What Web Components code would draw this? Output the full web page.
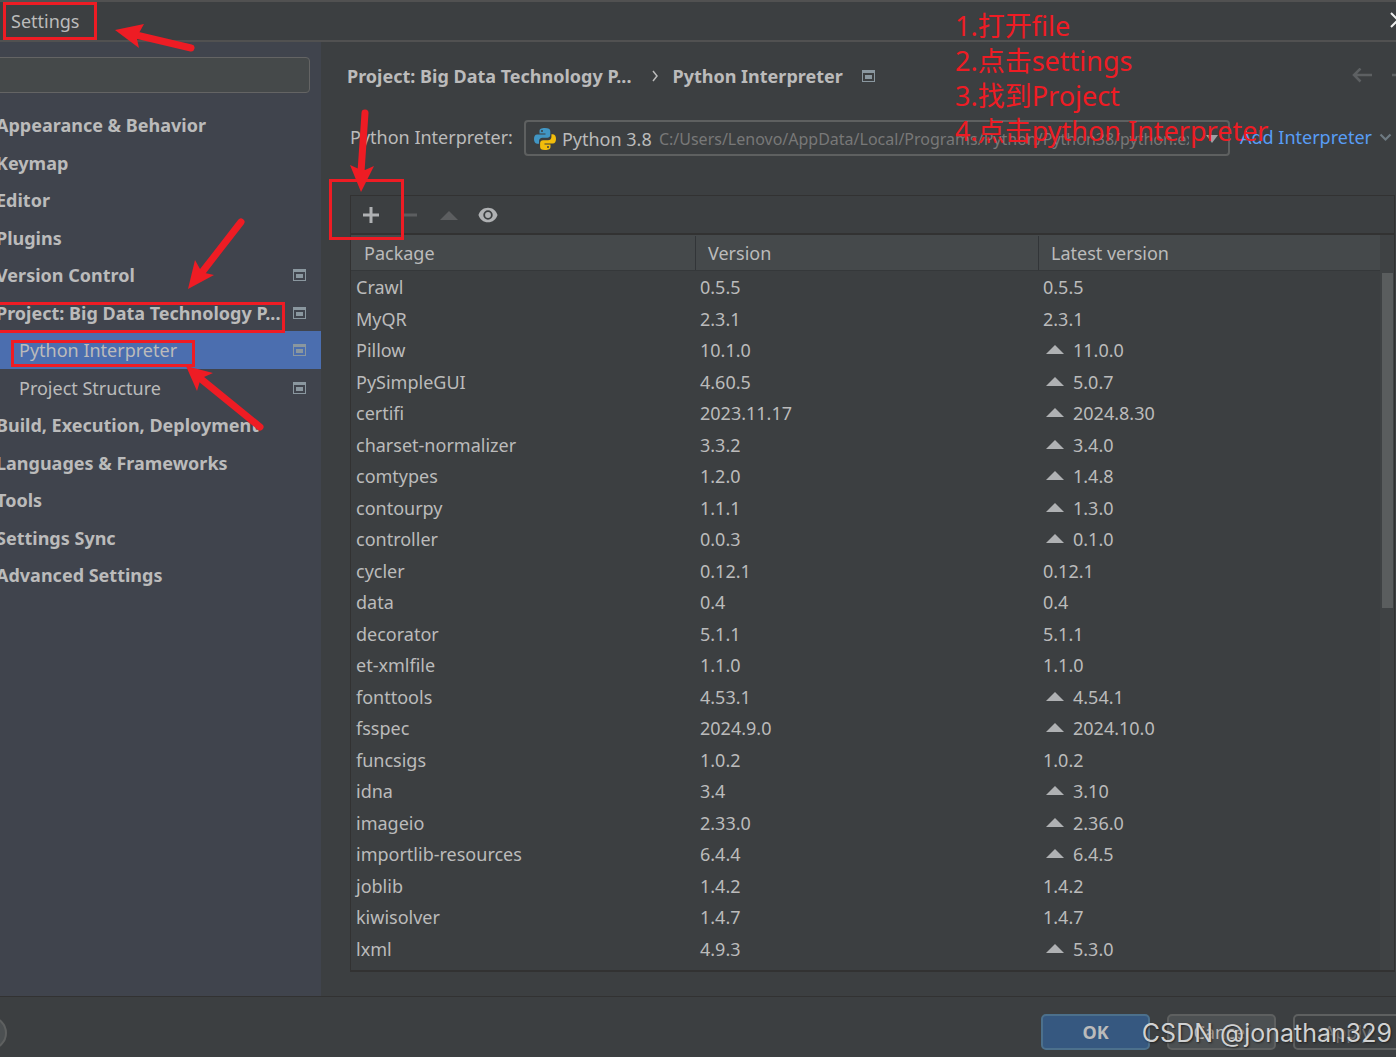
<!DOCTYPE html>
<html lang="en">
<head>
<meta charset="utf-8">
<title>Settings</title>
<style>
html, body { margin: 0; background: #3c3f41; }
body { font: 18px/26px "Noto Sans", "Noto Sans CJK SC", sans-serif; color: #bbbbbb; overflow: hidden; }
</style>
</head>
<body>
<settings-window></settings-window>
<script>
function define(name, html, setup) {
  const t = document.createElement('template');
  t.innerHTML = html;
  customElements.define(name, class extends HTMLElement {
    constructor() {
      super();
      this.attachShadow({ mode: 'open' }).appendChild(t.content.cloneNode(true));
    }
    connectedCallback() { if (setup) setup(this, this.shadowRoot); }
  });
}

define('project-icon', `
<style>:host{display:block;flex:none;width:13px;height:12px}svg{display:block}</style>
<svg width="13" height="12" aria-hidden="true"><path fill="#8a979f" fill-rule="evenodd" d="M0 0h13v12H0zM1 3v8h11V3z"/><path fill="#8a979f" d="M3 5h7v4H3z"/></svg>`);

define('title-bar', `
<style>
:host{display:flex;align-items:center;justify-content:space-between;height:38px;border:solid #515151;border-width:2px 0;padding-left:11px}
h1{font:inherit;margin:0}
button{border:0;background:none;padding:0;width:6px;height:18px;overflow:hidden}
svg{display:block}
</style>
<h1><slot></slot></h1>
<button aria-label="Close"><svg width="16" height="18"><path d="M1 1l14 14M15 1L1 15" stroke="#eee" stroke-width="2"/></svg></button>`);

define('nav-item', `
<style>
:host{display:block;height:38px}
:host(:nth-of-type(even)){height:37px}
a{display:flex;height:100%;align-items:center;color:inherit;text-decoration:none;font-weight:700;padding:0 15px 0 0;box-sizing:border-box}
span{flex:1;white-space:nowrap;margin-left:-4px}
:host([child]) a{font-weight:400}
:host([child]) span{margin-left:19px}
:host([selected]) a{background:#4b6eaf}
project-icon{display:none}
:host([project]) project-icon{display:block}
</style>
<a href="#"><span><slot></slot></span><project-icon></project-icon></a>`);

define('settings-nav', `
<style>
:host{display:block;flex:none;width:321px;background:#40444d;overflow:hidden}
input{display:block;box-sizing:border-box;width:314px;height:36px;margin:15px 0 13px -4px;border:1px solid #646464;border-radius:4px;background:#45494a;color:inherit;font:inherit}
nav{display:block}
</style>
<input type="search" aria-label="Search settings">
<nav>
<nav-item>Appearance &amp; Behavior</nav-item>
<nav-item>Keymap</nav-item>
<nav-item>Editor</nav-item>
<nav-item>Plugins</nav-item>
<nav-item project>Version Control</nav-item>
<nav-item project>Project: Big Data Technology P...</nav-item>
<nav-item child selected project>Python Interpreter</nav-item>
<nav-item child project>Project Structure</nav-item>
<nav-item>Build, Execution, Deployment</nav-item>
<nav-item>Languages &amp; Frameworks</nav-item>
<nav-item>Tools</nav-item>
<nav-item>Settings Sync</nav-item>
<nav-item>Advanced Settings</nav-item>
</nav>`);

define('page-breadcrumb', `
<style>
:host{display:flex;align-items:center;height:36px;margin-top:16px;padding-left:26px;font-weight:700;white-space:nowrap}
.sep{margin:0 14px 0 21px}
project-icon{margin-left:19px}
.nav{margin-left:auto;display:flex;gap:20px}
button{border:0;background:none;padding:0}
button:last-child{width:4px;overflow:hidden}
svg{display:block}
</style>
<span>Project: Big Data Technology P...</span>
<svg class="sep" width="6" height="12" aria-hidden="true"><path d="M1 1l4 5-4 5" fill="none" stroke="#bbb" stroke-width="1.5"/></svg>
<span>Python Interpreter</span><project-icon></project-icon>
<div class="nav">
<button aria-label="Back"><svg width="20" height="16"><path d="M20 7H2M8.500 .5L2 7l6.500 6.500" fill="none" stroke="#5d6062" stroke-width="2.500"/></svg></button>
<button aria-label="Forward"><svg width="20" height="16"><path d="M0 7h18M12 1l6 6-6 6" fill="none" stroke="#5d6062" stroke-width="2.500"/></svg></button>
</div>`);

define('interpreter-picker', `
<style>
:host{display:flex;align-items:center;margin-top:26px;height:36px;padding:0 4px 0 29px;white-space:nowrap}
.box{box-sizing:border-box;flex:1;min-width:0;height:36px;margin:0 10px 0 11px;display:flex;align-items:center;border:2px solid #5e6060;border-radius:4px;padding:2px 10px 0 8px}
svg{display:block;flex:none}
select{appearance:none;border:0;background:none;color:inherit;font:inherit;padding:0;margin:0 4px 0 6px;width:93px;flex:none}
.path{flex:1;min-width:0;overflow:hidden;color:#787878;font-size:16px;margin-right:17px}
label,a{padding-bottom:2px}
a{color:#589df6;text-decoration:none;display:flex;align-items:center;gap:7px}
</style>
<label for="py">Python Interpreter:</label>
<div class="box">
<svg width="22" height="22" viewBox="0 0 22 22" aria-hidden="true">
<path fill="#4196c4" d="M11 0c-4 0-5.500 1-5.500 3.200V5.500h6V6.500H3.200C1 6.500 0 8.500 0 11s1 4.700 3 4.700h2v-2.600c0-2 1.500-3.300 3.300-3.300h5c1.700 0 3-1.300 3-3V3.200C16.300 1 14.500 0 11 0z"/><circle cx="8" cy="3" r="1" fill="#3c3f41"/>
<path fill="#f2bd0b" d="M11 22c4 0 5.500-1 5.500-3.200v-2.300h-6v-1h8.300c2.200 0 3.200-2 3.200-4.500s-1-4.700-3-4.700h-1.600v2.600c0 2-1.500 3.300-3.300 3.300h-5c-1.700 0-3 1.300-3 3v3.600C6.100 21 7.500 22 11 22z"/><circle cx="14" cy="19" r="1" fill="#3c3f41"/></svg>
<select id="py"><option>Python 3.8</option></select>
<span class="path">C:/Users/Lenovo/AppData/Local/Programs/Python/Python38/python.exe</span>
<svg width="12" height="8" aria-hidden="true"><path d="M0 0h12L6 8z" fill="#9da0a2"/></svg>
</div>
<a href="#">Add Interpreter <svg width="13" height="9" aria-hidden="true"><path d="M1.500 1.500l5 5 5-5" fill="none" stroke="#6e7a82" stroke-width="2.200"/></svg></a>`);

define('package-toolbar', `
<style>
:host{display:flex;align-items:center;height:36px;padding-top:1px;box-sizing:content-box;border-bottom:2px solid #323232;padding-left:10px;gap:19px}
button{border:0;background:none;padding:0;width:20px;height:20px;display:grid;place-items:center}
svg{display:block}
</style>
<button aria-label="Install"><svg width="16" height="16"><path d="M8 0v16M0 8h16" stroke="#afb1b3" stroke-width="3"/></svg></button>
<button aria-label="Uninstall"><svg width="16" height="16"><path d="M1 8h14" stroke="#5c5e60" stroke-width="3"/></svg></button>
<button aria-label="Upgrade"><svg width="18" height="16"><path d="M0 13L9 4l9 9z" fill="#5c5e60"/></svg></button>
<button aria-label="Show early releases"><svg width="20" height="16" viewBox="0 0 22 16"><path fill="#afb1b3" fill-rule="evenodd" d="M11 0C6 0 2 3 .5 8 2 13 6 16 11 16s9-3 10.500-8C20 3 16 0 11 0zm0 2.800a5.200 5.200 0 1 1 0 10.400 5.200 5.200 0 0 1 0-10.400z"/><circle cx="11" cy="8" r="3.200" fill="#afb1b3"/></svg></button>`);

const packages = [
['Crawl','0.5.5','0.5.5'],['MyQR','2.3.1','2.3.1'],['Pillow','10.1.0','11.0.0'],['PySimpleGUI','4.60.5','5.0.7'],
['certifi','2023.11.17','2024.8.30'],['charset-normalizer','3.3.2','3.4.0'],['comtypes','1.2.0','1.4.8'],
['contourpy','1.1.1','1.3.0'],['controller','0.0.3','0.1.0'],['cycler','0.12.1','0.12.1'],['data','0.4','0.4'],
['decorator','5.1.1','5.1.1'],['et-xmlfile','1.1.0','1.1.0'],['fonttools','4.53.1','4.54.1'],
['fsspec','2024.9.0','2024.10.0'],['funcsigs','1.0.2','1.0.2'],['idna','3.4','3.10'],['imageio','2.33.0','2.36.0'],
['importlib-resources','6.4.4','6.4.5'],['joblib','1.4.2','1.4.2'],['kiwisolver','1.4.7','1.4.7'],['lxml','4.9.3','5.3.0']];

define('package-table', `
<style>
:host{display:flex}
table{flex:1;border-collapse:separate;border-spacing:0;table-layout:fixed;margin-bottom:6px}
.a{width:345px}.b{width:343px}
th{height:36px;box-sizing:border-box;font-weight:400;text-align:left;background:#45494b;padding:0 0 0 13px;border-bottom:1px solid #35383a}
th+th{padding-left:12px}
th:not(:last-child){background:linear-gradient(#323538,#323538) right center/1px 34px no-repeat #45494b}
td{height:31px;padding:0 0 0 5px;line-height:26px}
td:not(:first-child){padding-left:4px}
tr:nth-child(odd) td{height:32px}
svg{margin:0 9px 0 3px;vertical-align:3px}
.bar{flex:none;width:14px;background:#3f4244;padding-top:38px;box-sizing:border-box}
.bar i{display:block;width:11px;height:335px;margin-left:2px;background:#5a5d5e}
</style>
<table><colgroup><col class="a"><col class="b"><col></colgroup>
<thead><tr><th>Package</th><th>Version</th><th>Latest version</th></tr></thead><tbody></tbody></table>
<div class="bar"><i></i></div>`, (host, root) => {
  root.querySelector('tbody').innerHTML = packages.map(([n, v, l]) =>
    `<tr><td>${n}</td><td>${v}</td><td>${v === l ? '' : '<svg width="18" height="9" aria-hidden="true"><path d="M0 9L9 0l9 9z" fill="#afb1b3"/></svg>'}${l}</td></tr>`).join('');
});

define('interpreter-page', `
<style>
:host{display:block;flex:1;min-width:0}
section{margin:39px 1px 24px 29px;border:1px solid #323232;border-bottom-width:2px;}
</style>
<page-breadcrumb></page-breadcrumb>
<interpreter-picker></interpreter-picker>
<section><package-toolbar></package-toolbar><package-table></package-table></section>`);

define('dialog-button', `
<style>
:host{display:block}
button{display:block;width:109px;height:36px;box-sizing:border-box;border:2px solid #5e6060;border-radius:5px;background:#4c5052;color:#bbb;font:inherit;padding:0}
:host([primary]) button{background:#365880;border-color:#4c708c;font-weight:700}
:host([off]) button{background:none;color:#777}
</style><button><slot></slot></button>`);

define('dialog-footer', `
<style>
:host{display:flex;align-items:center;justify-content:space-between;height:60px;border-top:1px solid #323232;}
.help{width:34px;height:34px;box-sizing:border-box;border-radius:50%;border:2px solid #5e6060;background:#4c5052;margin:12px 0 0 -27px;padding:0}
.row{display:flex;gap:17px;margin:10px -6px 0 0}
</style>
<button class="help" aria-label="Help"></button>
<div class="row"><dialog-button primary>OK</dialog-button><dialog-button>Cancel</dialog-button><dialog-button off>Apply</dialog-button></div>`);

/* Red marker layer: boxes, arrows and the numbered steps float over the dialog. */
define('marker-layer', `
<style>
:host{position:absolute;inset:0;pointer-events:none;color:#ee1c24;overflow:hidden}
svg{position:absolute;left:0;top:0}
ol{position:absolute;left:955px;top:8px;margin:0;padding:0;list-style:none;font:27px/35px "Noto Sans","Noto Sans CJK SC",sans-serif;white-space:nowrap}
p{position:absolute;right:4px;bottom:5px;margin:0;font:25px/38px Inter,sans-serif;color:#d0d1d2;text-shadow:1px 1px 2px #222;white-space:nowrap}
</style>
<svg width="1396" height="1057" aria-hidden="true">
<g fill="none" stroke="#ee1c24" stroke-width="3">
<path d="M4.500 3.500h91v35h-91zM330.500 180.500h72v58h-72zM-5 303.500h288.500v28H-5zM12.500 341.500h181v24h-181z"/>
<g stroke-width="7" stroke-linecap="round"><path d="M191 48L136 35M365 113L361 172M241 222L203 271M260 427L201 379"/></g></g>
<g fill="#ee1c24"><path d="M115 30l29-6-5 9-2 6 2 9zM361 192l-11-27 9 4 6 1 9-4zM188 289l7-29 5 9 5 4 9 2zM186 366l27 7-9 4-4 4-3 10z"/></g>
</svg>
<ol><li>1.打开file</li><li>2.点击settings</li><li>3.找到Project</li><li>4.点击python Interpreter</li></ol>
<p>CSDN @jonathan329</p>`);

define('settings-window', `
<style>
:host{display:flex;flex-direction:column;position:relative;min-height:100vh;overflow:hidden}
main{display:flex;flex:1}
</style>
<title-bar>Settings</title-bar>
<main><settings-nav></settings-nav><interpreter-page></interpreter-page></main>
<dialog-footer></dialog-footer>
<marker-layer></marker-layer>`);
</script>
</body>
</html>
